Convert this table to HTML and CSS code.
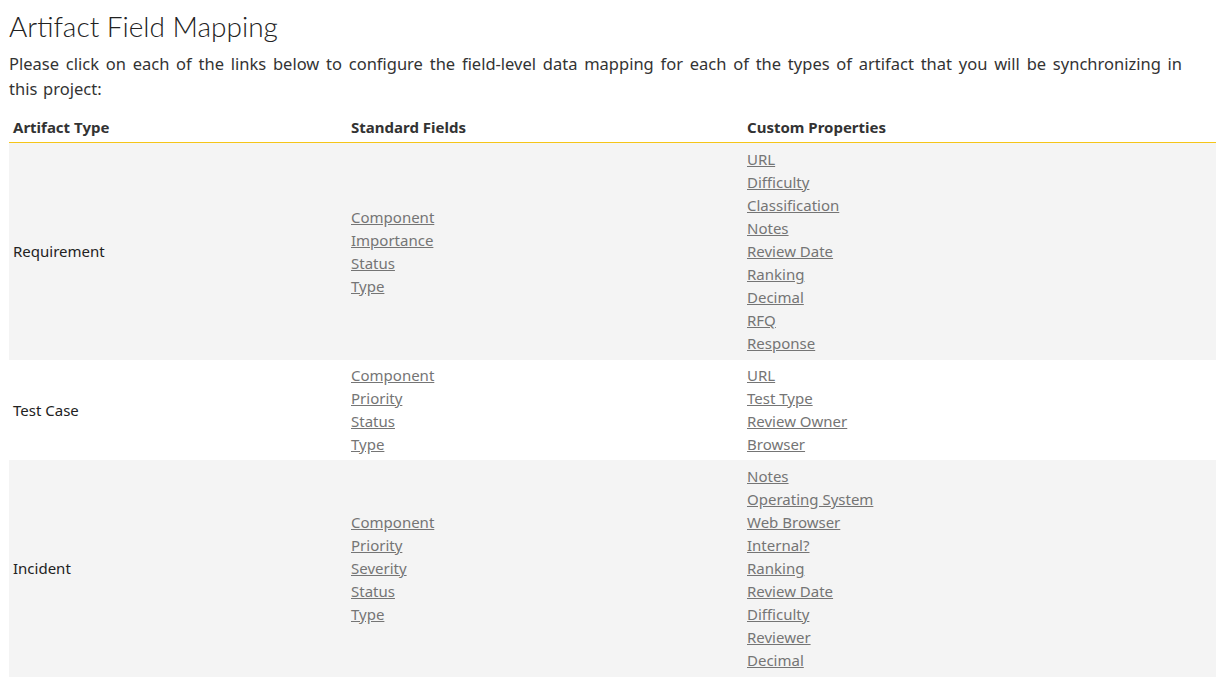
FILE: index.html
```html
<!DOCTYPE html>
<html>
<head>
<meta charset="utf-8">
<link rel="stylesheet" href="styles.css">
</head>
<body>
<div class="page">
<h1 class="title">Artifact Field Mapping</h1>
<p class="intro">Please click on each of the links below to configure the field-level data mapping for each of the types of artifact that you will be synchronizing in this project:</p>
<table class="grid">
<thead>
<tr><th class="c1">Artifact Type</th><th class="c2">Standard Fields</th><th class="c3">Custom Properties</th></tr>
</thead>
<tbody>
<tr class="alt">
<td>Requirement</td>
<td><a href="#">Component</a><br><a href="#">Importance</a><br><a href="#">Status</a><br><a href="#">Type</a></td>
<td><a href="#">URL</a><br><a href="#">Difficulty</a><br><a href="#">Classification</a><br><a href="#">Notes</a><br><a href="#">Review Date</a><br><a href="#">Ranking</a><br><a href="#">Decimal</a><br><a href="#">RFQ</a><br><a href="#">Response</a></td>
</tr>
<tr class="short">
<td>Test Case</td>
<td><a href="#">Component</a><br><a href="#">Priority</a><br><a href="#">Status</a><br><a href="#">Type</a></td>
<td><a href="#">URL</a><br><a href="#">Test Type</a><br><a href="#">Review Owner</a><br><a href="#">Browser</a></td>
</tr>
<tr class="alt">
<td>Incident</td>
<td><a href="#">Component</a><br><a href="#">Priority</a><br><a href="#">Severity</a><br><a href="#">Status</a><br><a href="#">Type</a></td>
<td><a href="#">Notes</a><br><a href="#">Operating System</a><br><a href="#">Web Browser</a><br><a href="#">Internal?</a><br><a href="#">Ranking</a><br><a href="#">Review Date</a><br><a href="#">Difficulty</a><br><a href="#">Reviewer</a><br><a href="#">Decimal</a></td>
</tr>
<tr>
<td>Task</td>
<td><a href="#">Component</a><br><a href="#">Priority</a><br><a href="#">Status</a><br><a href="#">Type</a></td>
<td><a href="#">Notes</a><br><a href="#">Review Date</a><br><a href="#">Ranking</a><br><a href="#">Difficulty</a><br><a href="#">Decimal</a><br><a href="#">Reviewer</a></td>
</tr>
</tbody>
</table>
</div>
</body>
</html>
```
FILE: styles.css
```css
html, body {
  margin: 0;
  padding: 0;
  background: #fff;
}
.page {
  padding: 0 10px 0 9px;
  font-family: "Noto Sans", "DejaVu Sans", sans-serif;
  color: #222;
}
.title {
  font-family: "Lato", sans-serif;
  font-weight: 300;
  font-size: 28px;
  line-height: 34px;
  margin: 9px 0 8px 0;
  color: #222;
}
.intro {
  font-size: 16.5px;
  line-height: 25px;
  margin: 0 34px 11px 0;
  text-align: justify;
  word-spacing: 1.5px;
  color: #333;
}
.grid {
  width: 100%;
  border-collapse: collapse;
  font-size: 15px;
  line-height: 23px;
}
.grid th {
  text-align: left;
  font-weight: 700;
  padding: 4px 4px 3px 4px;
  border-bottom: 1px solid #f5c518;
  color: #333;
}
.grid .c1 { width: 330px; }
.grid .c2 { width: 388px; }
.grid td {
  padding: 5px 4px;
  vertical-align: middle;
}
.grid tr.short td {
  padding: 4px;
}
.grid tr.alt td {
  background: #f4f4f4;
}
.grid a {
  color: #757575;
  text-decoration: underline;
}
```
